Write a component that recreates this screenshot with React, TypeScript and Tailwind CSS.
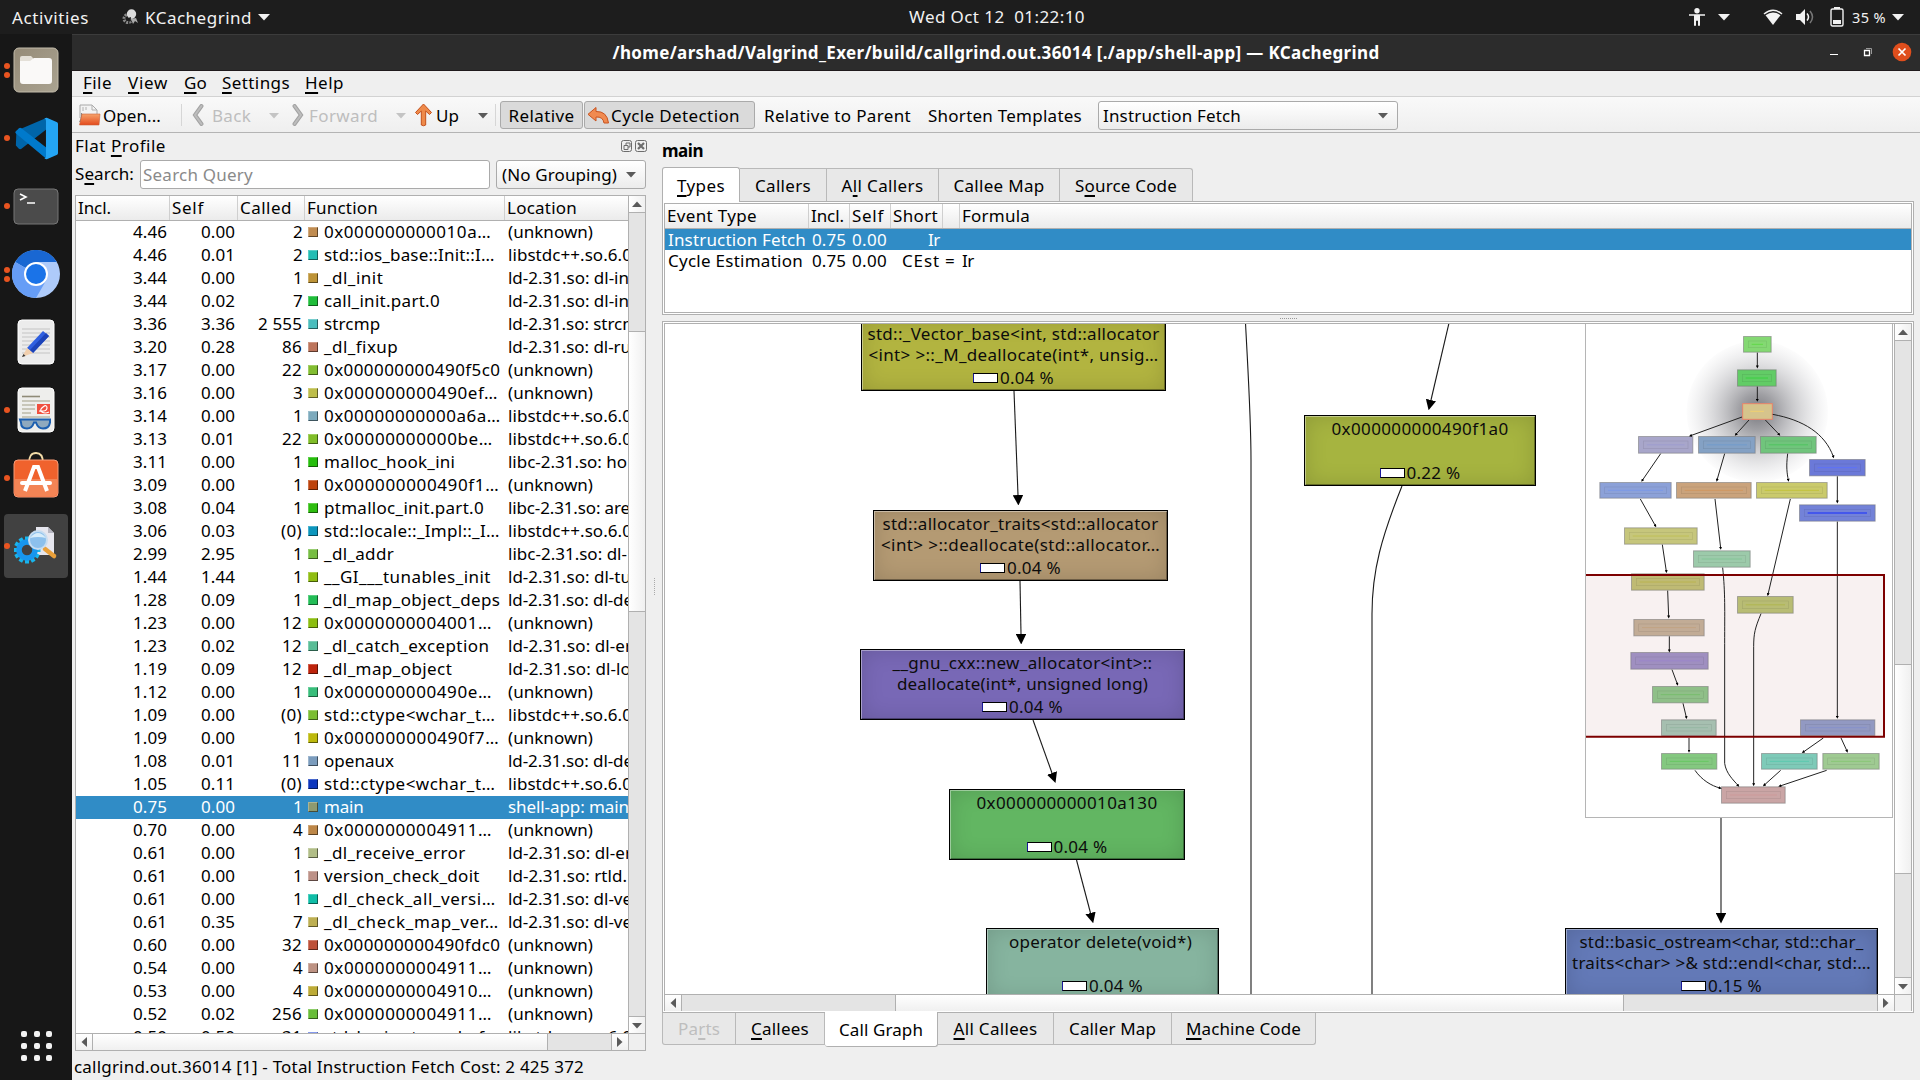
import React, { useLayoutEffect, useRef, useState } from 'react';

/* Single-line label tracked so that it spans exactly `w` pixels; `u` marks the mnemonic character. */
function T({ t, w, u, c = '' }: { t: string; w?: number; u?: number; c?: string }) {
  const ref = useRef<HTMLSpanElement>(null);
  const [ls, setLs] = useState(0);
  useLayoutEffect(() => {
    if (!w || !ref.current) return;
    const natural = ref.current.getBoundingClientRect().width;
    setLs((prev) => prev + (w - natural) / t.length);
  }, [w, t]);
  return (
    <span ref={ref} className={`inline-block shrink-0 whitespace-pre ${c}`} style={{ letterSpacing: `${ls}px` }}>
      {u === undefined ? (
        t
      ) : (
        <>
          {t.slice(0, u)}
          <span className="underline decoration-[1.5px] underline-offset-[3px]">{t[u]}</span>
          {t.slice(u + 1)}
        </>
      )}
    </span>
  );
}

function Tri({ dir = 'down', c = 'text-[#5a5a5a]' }: { dir?: 'down' | 'up' | 'left' | 'right'; c?: string }) {
  const d = { down: 'M0 3h10l-5 5.5z', up: 'M0 8h10l-5-5.5z', left: 'M8 0v10l-5.5-5z', right: 'M2 0v10l5.500-5z' }[dir];
  return (
    <svg className={`h-[10px] w-[10px] shrink-0 ${c}`} viewBox="0 0 10 10">
      <path d={d} fill="currentColor" />
    </svg>
  );
}

const rows: [string, string, string, string, string, number, string, number][] = [
  ['4.46', '0.00', '2', 'bg-[#c08c51]', '0x000000000010a…', 1101, '(unknown)', 85],
  ['4.46', '0.01', '2', 'bg-[#22bdb4]', 'std::ios_base::Init::I…', 1110, 'libstdc++.so.6.0', 124],
  ['3.44', '0.00', '1', 'bg-[#bd9337]', '_dl_init', 819, 'ld-2.31.so: dl-in', 121],
  ['3.44', '0.02', '7', 'bg-[#1fbd3a]', 'call_init.part.0', 967, 'ld-2.31.so: dl-in', 121],
  ['3.36', '3.36', '2 555', 'bg-[#4abdbd]', 'strcmp', 811, 'ld-2.31.so: strcm', 130],
  ['3.20', '0.28', '86', 'bg-[#bd755c]', '_dl_fixup', 858, 'ld-2.31.so: dl-ru', 123],
  ['3.17', '0.00', '22', 'bg-[#82bd31]', '0x000000000490f5c0', 1125, '(unknown)', 85],
  ['3.16', '0.00', '3', 'bg-[#bdbd4a]', '0x000000000490ef…', 1119, '(unknown)', 85],
  ['3.14', '0.00', '1', 'bg-[#7caabd]', '0x00000000000a6a…', 1126, 'libstdc++.so.6.0', 124],
  ['3.13', '0.01', '22', 'bg-[#80bd28]', '0x00000000000be…', 1105, 'libstdc++.so.6.0', 124],
  ['3.11', '0.00', '1', 'bg-[#26bd0c]', 'malloc_hook_ini', 1007, 'libc-2.31.so: ho', 119],
  ['3.09', '0.00', '1', 'bg-[#bd430c]', '0x000000000490f1…', 1122, '(unknown)', 85],
  ['3.08', '0.04', '1', 'bg-[#2ebd0f]', 'ptmalloc_init.part.0', 1082, 'libc-2.31.so: are', 122],
  ['3.06', '0.03', '(0)', 'bg-[#0c96bd]', 'std::locale::_Impl::_I…', 1123, 'libstdc++.so.6.0', 124],
  ['2.99', '2.95', '1', 'bg-[#77bd42]', '_dl_addr', 847, 'libc-2.31.so: dl-', 119],
  ['1.44', '1.44', '1', 'bg-[#90bd12]', '__GI___tunables_init', 1100, 'ld-2.31.so: dl-tu', 123],
  ['1.28', '0.09', '1', 'bg-[#23bd57]', '_dl_map_object_deps', 1125, 'ld-2.31.so: dl-de', 125],
  ['1.23', '0.00', '12', 'bg-[#8bbd0f]', '0x0000000004001…', 1103, '(unknown)', 85],
  ['1.23', '0.02', '12', 'bg-[#58bd96]', '_dl_catch_exception', 1096, 'ld-2.31.so: dl-er', 124],
  ['1.19', '0.09', '12', 'bg-[#bd230c]', '_dl_map_object', 999, 'ld-2.31.so: dl-lo', 123],
  ['1.12', '0.00', '1', 'bg-[#38bd7a]', '0x000000000490e…', 1103, '(unknown)', 85],
  ['1.09', '0.00', '(0)', 'bg-[#7bbd31]', 'std::ctype<wchar_t…', 1112, 'libstdc++.so.6.0', 124],
  ['1.09', '0.00', '1', 'bg-[#bdb90c]', '0x000000000490f7…', 1122, '(unknown)', 85],
  ['1.08', '0.01', '11', 'bg-[#7b9cbd]', 'openaux', 847, 'ld-2.31.so: dl-de', 125],
  ['1.05', '0.11', '(0)', 'bg-[#0c36bd]', 'std::ctype<wchar_t…', 1112, 'libstdc++.so.6.0', 124],
  ['0.75', '0.00', '1', 'bg-[#8d9a70]', 'main', 767, 'shell-app: main', 121],
  ['0.70', '0.00', '4', 'bg-[#bd8748]', '0x0000000004911…', 1103, '(unknown)', 85],
  ['0.61', '0.00', '1', 'bg-[#b1bd87]', '_dl_receive_error', 1034, 'ld-2.31.so: dl-er', 124],
  ['0.61', '0.00', '1', 'bg-[#bd9187]', 'version_check_doit', 1071, 'ld-2.31.so: rtld.', 119],
  ['0.61', '0.00', '1', 'bg-[#0fbda7]', '_dl_check_all_versi…', 1113, 'ld-2.31.so: dl-ve', 124],
  ['0.61', '0.35', '7', 'bg-[#bdaf52]', '_dl_check_map_ver…', 1121, 'ld-2.31.so: dl-ve', 124],
  ['0.60', '0.00', '32', 'bg-[#bd5038]', '0x000000000490fdc0', 1125, '(unknown)', 85],
  ['0.54', '0.00', '4', 'bg-[#bd9283]', '0x0000000004911…', 1103, '(unknown)', 85],
  ['0.53', '0.00', '4', 'bg-[#bdab37]', '0x0000000004910…', 1103, '(unknown)', 85],
  ['0.52', '0.02', '256', 'bg-[#68bd38]', '0x0000000004911…', 1103, '(unknown)', 85],
  ['0.50', '0.50', '31', 'bg-[#5c78e6]', 'std::basic_streambuf…', 1115, 'libstdc++.so.6.0', 124],
];

const numW = (s: string) => ({ 1: 9, 2: 20, 3: s[0] === '(' ? 21 : 30, 4: 34, 5: 44 })[s.length] ?? 34;

function TopBar() {
  return (
    <div className="flex h-[34px] shrink-0 items-center bg-[#1d1d1d] text-[#f2f2f2]">
      <div className="flex w-[909px] items-center pl-[12px]">
        <T t="Activities" w={77} />
        <svg className="ml-[33px] h-[18px] w-[17px]" viewBox="0 0 17 18">
          <circle cx="6" cy="10.500" r="4" fill="none" stroke="#8a8a8a" strokeWidth="3" strokeDasharray="2 1" />
          <path d="M9 11l5-1 2 5-3-2-2 3z" fill="#aaa" />
          <circle cx="9.500" cy="6" r="4.700" fill="#dcdcdc" />
          <path d="M6 10l3-1-1 6z" fill="#1d1d1d" />
        </svg>
        <T t="KCachegrind" w={107} c="ml-[6px] mr-[6px]" />
        <svg className="h-[8px] w-[12px]" viewBox="0 0 12 8"><path d="M0 1h12L6 7.500z" fill="#f2f2f2" /></svg>
      </div>
      <T t="Wed Oct 12  01:22:10" w={176} c="mb-px" />
      <div className="ml-auto flex items-center pr-[16px]">
        <svg className="h-[18px] w-[16px]" viewBox="0 0 16 18" fill="#f2f2f2">
          <circle cx="8" cy="2.700" r="2.700" /><path d="M0 6.200h16v1.600h-5v10H9v-5H7v5H5v-10H0z" />
        </svg>
        <svg className="ml-[13px] h-[8px] w-[12px]" viewBox="0 0 12 8"><path d="M0 1h12L6 7.500z" fill="#f2f2f2" /></svg>
        <svg className="ml-[33px] h-[17px] w-[20px]" viewBox="0 0 20 17">
          <path d="M1 5Q10-2.500 19 5" fill="none" stroke="#f2f2f2" strokeWidth="1.500" /><path d="M2.500 6.200Q10 1 17.500 6.200L10 16z" fill="#f2f2f2" />
        </svg>
        <svg className="ml-[13px] h-[16px] w-[19px]" viewBox="0 0 19 16" fill="none">
          <path d="M0 5h4l5-5v16l-5-5H0z" fill="#f2f2f2" /><path d="M11 4.500q3 3.500 0 7" stroke="#f2f2f2" strokeWidth="1.500" /><path d="M14 2q5 6 0 12" stroke="#777" strokeWidth="1.500" />
        </svg>
        <svg className="ml-[15px] h-[20px] w-[14px]" viewBox="0 0 14 20" fill="none">
          <path d="M4 0h6v2H4z" fill="#f2f2f2" /><rect x="1" y="2" width="12" height="17" rx="1.500" stroke="#f2f2f2" strokeWidth="1.400" /><path d="M3 13h8v4H3z" fill="#f2f2f2" />
        </svg>
        <T t="35 %" w={34} c="ml-[8px] mr-[6px] text-[14.5px]" />
        <svg className="h-[8px] w-[12px]" viewBox="0 0 12 8"><path d="M0 1h12L6 7.500z" fill="#f2f2f2" /></svg>
      </div>
    </div>
  );
}

function DockItem({ dots = 1, active = false, h, children }: { dots?: number; active?: boolean; h: string; children: React.ReactNode }) {
  return (
    <div className={`relative flex w-[72px] shrink-0 items-center justify-center ${h}`}>
      {active && <div className="absolute inset-y-[2px] left-[4px] right-[4px] rounded-[4px] bg-[#414141]" />}
      <div className="absolute inset-y-0 left-[4px] flex flex-col justify-center gap-[3px]">
        {dots > 0 && <div className="h-[6px] w-[6px] rounded-full bg-[#e95420]" />}
        {dots > 1 && <div className="h-[6px] w-[6px] rounded-full bg-[#e95420]" />}
      </div>
      <div className="relative">{children}</div>
    </div>
  );
}

function Dock() {
  const gear = Array.from({ length: 12 }, (_, i) => i * 30);
  return (
    <div className="flex w-[72px] shrink-0 flex-col bg-[#171717] pt-[2px]">
      <DockItem dots={2} h="h-[68px]">
        <svg className="h-[46px] w-[46px]" viewBox="0 0 46 46">
          <defs><linearGradient id="fl" x1="0" y1="0" x2="1" y2="1"><stop offset="0" stopColor="#958b78" /><stop offset="1" stopColor="#aaa391" /></linearGradient></defs>
          <rect x="1" y="1" width="44" height="44" rx="5" fill="url(#fl)" stroke="#c3bcab" />
          <path d="M7 13v-2q0-2 2-2h9l3 3h8v5H7z" fill="#e4e0d8" /><path d="M7 14h10l4-3h15q3 0 3 3v20q0 3-3 3H10q-3 0-3-3z" fill="#faf9f8" />
        </svg>
      </DockItem>
      <DockItem h="h-[68px]">
        <svg className="h-[43px] w-[43px]" viewBox="0 0 100 100">
          <path d="M2 34l7-8q3-2 6 0l59 46v26L3 68q-4-4 0-7z" fill="#0065a9" transform="matrix(1 0 0 -1 0 100)" />
          <path d="M2 34l7-8q3-2 6 0l59 46v26L3 39q-3-2-1-5z" fill="#007acc" />
          <path d="M74 2l24 10q2 1 2 4v68q0 3-2 4L74 98l-6-1q4-1 4-6V9q0-5-4-6z" fill="#24a5f4" />
        </svg>
      </DockItem>
      <DockItem h="h-[68px]">
        <svg className="h-[37px] w-[46px]" viewBox="0 0 46 37">
          <rect x="1" y="1" width="44" height="35" rx="4" fill="#4b4b4b" stroke="#777" />
          <path d="M7 6l6 3-6 3M14 15h8" stroke="#fff" strokeWidth="1.600" fill="none" />
        </svg>
      </DockItem>
      <DockItem dots={2} h="h-[68px]">
        <svg className="h-[48px] w-[48px]" viewBox="0 0 48 48">
          <circle cx="24" cy="24" r="24" fill="#aecbfa" />
          <path d="M24 24L3.200 12A24 24 0 0 1 44.800 12z" fill="#1967d2" />
          <path d="M3.200 12A24 24 0 0 0 24 48L34.400 30 24 24z" fill="#669df6" />
          <path d="M24 12h20.800L34 24z" fill="#aecbfa" />
          <circle cx="24" cy="24" r="12" fill="#fff" /><circle cx="24" cy="24" r="10" fill="#1a73e8" />
        </svg>
      </DockItem>
      <DockItem dots={0} h="h-[68px]">
        <svg className="h-[46px] w-[38px]" viewBox="0 0 38 46">
          <rect x="1" y="1" width="36" height="44" rx="4" fill="#ececec" stroke="#fff" />
          <path d="M5 10h28M5 14h28M5 18h28M5 22h28M5 26h28M5 30h28M5 34h28" stroke="#c4c4c4" />
          <path d="M10 29L26 12l6 5-16 17z" fill="#2f5fe0" /><path d="M13 31l16-17 3 3-16 17z" fill="#1c43b8" /><path d="M10 29l6 5-11 4z" fill="#f1cfae" /><path d="M6.500 35l2 2-3.500 1z" fill="#333" />
        </svg>
      </DockItem>
      <DockItem h="h-[68px]">
        <svg className="h-[46px] w-[38px]" viewBox="0 0 38 46">
          <rect x="1" y="1" width="36" height="44" rx="4" fill="#eeeeec" stroke="#fff" />
          <path d="M5 9.500h18" stroke="#8f8b78" strokeWidth="1.600" /><path d="M5 14h28M5 18h13M5 22h13M5 26h9M5 30h28" stroke="#bcb9a8" strokeWidth="1.600" />
          <rect x="20" y="17" width="13" height="10" fill="#f0503f" /><path d="M22 24q8 1 8-3t-4-1-1 5 7 0" stroke="#fff" strokeWidth="1.200" fill="none" />
          <path d="M3 32.500h30v3q-1 6-7 6-5 0-7-6h-2q-2 6-7 6-6 0-6-6z" fill="#8fa9be" stroke="#1c5fb0" strokeWidth="2" />
        </svg>
      </DockItem>
      <DockItem h="h-[68px]">
        <svg className="mb-[8px] h-[48px] w-[46px]" viewBox="0 0 46 48">
          <path d="M16 13q0-10 7-10t7 10" fill="none" stroke="#f3dca8" strokeWidth="1.800" />
          <rect x="1" y="10" width="44" height="37" rx="4" fill="#f0622d" stroke="#f79c79" /><path d="M2 29h42v14q0 3-3 3H5q-3 0-3-3z" fill="#f38455" />
          <path d="M12 41l9-24h4l9 24" fill="none" stroke="#fff" strokeWidth="4" /><path d="M9 33h28" stroke="#fff" strokeWidth="4" strokeLinecap="round" />
        </svg>
      </DockItem>
      <DockItem active h="h-[68px]">
        <svg className="h-[40px] w-[44px]" viewBox="0 0 44 40">
          <path d="M22 1h12l6 6v22H22z" fill="#e6e6ee" /><path d="M34 1v6h6z" fill="#b5b5c0" />
          <g transform="translate(13 24)">
            {gear.map((a) => <rect key={a} x="-2" y="-13.5" width="4" height="6" fill="#19b5ec" transform={`rotate(${a})`} />)}
            <circle r="8" fill="none" stroke="#1796ee" strokeWidth="5.500" />
          </g>
          <path d="M31 23l9 7" stroke="#e9a03a" strokeWidth="4.500" strokeLinecap="round" />
          <circle cx="24" cy="14" r="9" fill="#8cc0ec" stroke="#c6dcf0" strokeWidth="2" /><path d="M16 12q8-10 16 0-8-2-16 0z" fill="#d8edfa" />
        </svg>
      </DockItem>
      <div className="mb-[19px] ml-[21px] mt-auto grid w-[32px] grid-cols-3 gap-[6px]">
        {gear.slice(0, 9).map((k) => <div key={k} className="h-[6px] w-[6px] rounded-[2px] bg-[#f2f2f2]" />)}
      </div>
    </div>
  );
}

function Toolbar() {
  return (
    <div className="flex h-[37px] shrink-0 items-center border-b border-t border-b-[#b4b4b4] border-t-[#d2d2d2] bg-gradient-to-b from-[#f9f9f9] to-[#efefef] pl-[6px] pt-px">
      <svg className="h-[22px] w-[23px] shrink-0" viewBox="0 0 23 22">
        <path d="M2 1h12l5 5v8H2z" fill="#f3f3f3" stroke="#a8a8a8" /><path d="M14 1v5h5M5 3v4M8 3v3" fill="none" stroke="#b0b0b0" />
        <path d="M1 18l2-4V9h1v9z" fill="#888" />
        <defs><linearGradient id="fo" x1="0" y1="0" x2="0" y2="1"><stop offset="0" stopColor="#f6a36c" /><stop offset="1" stopColor="#e34a1c" /></linearGradient></defs>
        <path d="M4 10h18l-1 11H1.500z" fill="url(#fo)" stroke="#c9623a" strokeWidth=".6" />
      </svg>
      <T t="Open..." w={58} c="ml-[2px]" />
      <div className="ml-[20px] h-[22px] w-px bg-[#d6d6d6]" />
      <svg className="ml-[10px] h-[22px] w-[12px]" viewBox="0 0 12 22"><path d="M9.500 2L3 11l6.500 9" fill="none" stroke="#a3a3a3" strokeWidth="4" strokeLinecap="round" /><path d="M9.500 2L3 11l6.500 9" fill="none" stroke="#bdbdbd" strokeWidth="2" strokeLinecap="round" /></svg>
      <T t="Back" w={39} c="ml-[8px] text-[#bebebe]" />
      <div className="ml-[18px]"><Tri c="text-[#c4c4c4]" /></div>
      <svg className="ml-[13px] h-[22px] w-[12px]" viewBox="0 0 12 22"><path d="M2.500 2L9 11l-6.500 9" fill="none" stroke="#a3a3a3" strokeWidth="4" strokeLinecap="round" /><path d="M2.500 2L9 11l-6.500 9" fill="none" stroke="#bdbdbd" strokeWidth="2" strokeLinecap="round" /></svg>
      <T t="Forward" w={69} c="ml-[5px] text-[#bebebe]" />
      <div className="ml-[18px]"><Tri c="text-[#c4c4c4]" /></div>
      <svg className="ml-[8px] h-[24px] w-[19px]" viewBox="0 0 19 24"><path d="M9.500 1l8 8.500-2 2-3.800-3.500V22q-2.200 1.500-4.400 0V8L3.500 11.500l-2-2z" fill="#ee8a4a" stroke="#c4501b" /></svg>
      <T t="Up" w={23} c="ml-[3px]" />
      <div className="ml-[19px] mr-[7px]"><Tri /></div>
      <div className="mr-[4px] h-[22px] w-px bg-[#d6d6d6]" />
      <div className="flex h-[28px] w-[83px] items-center justify-center rounded-[3px] border border-[#aaa] bg-[#dadada]"><T t="Relative" w={66} /></div>
      <div className="ml-px flex h-[28px] w-[171px] items-center rounded-[3px] border border-[#aaa] bg-[#dadada] pl-[2px]">
        <svg className="h-[20px] w-[23px]" viewBox="0 0 23 20"><path d="M9 2.500v4Q20 6 21.500 18H17Q16 11.500 9 12v4L1 9.300z" fill="#f08a50" stroke="#c9531f" /></svg>
        <T t="Cycle Detection" w={129} c="ml-px" />
      </div>
      <T t="Relative to Parent" w={147} c="ml-[9px]" />
      <T t="Shorten Templates" w={154} c="ml-[17px]" />
      <div className="ml-[16px] flex h-[29px] w-[300px] items-center justify-between rounded-[3px] border border-[#aaa] bg-gradient-to-b from-white to-[#ececec] pl-[4px] pr-[9px]">
        <T t="Instruction Fetch" w={138} /><Tri />
      </div>
    </div>
  );
}

const head = 'bg-gradient-to-b from-white to-[#ebebeb]';
const sbtnV = 'flex h-[17px] shrink-0 items-center justify-center bg-gradient-to-r from-white to-[#f0f0f0]';
const sbtnH = 'flex w-[17px] shrink-0 items-center justify-center bg-gradient-to-b from-white to-[#f0f0f0]';

function FlatProfile() {
  return (
    <div className="flex w-[574px] shrink-0 flex-col">
      <div className="flex h-[25px] shrink-0 items-center pl-[3px]">
        <T t="Flat Profile" w={91} u={5} c="mb-px" />
        <svg className="-mr-px ml-auto h-[12px] w-[26px]" viewBox="0 0 26 12" fill="none" stroke="#6d6d6d">
          <rect x=".5" y=".5" width="10" height="11" rx="2" /><path d="M3 5.500h4v4H3zM5 5V3h4v4H7" /><rect x="14.500" y=".5" width="11" height="11" rx="2" /><path d="M17 3l6 6M23 3l-6 6" strokeWidth="2.200" />
        </svg>
      </div>
      <div className="flex h-[37px] shrink-0 items-start pl-[3px] pt-[2px]">
        <T t="Search:" w={59} u={1} c="mt-[2px]" />
        <div className="ml-[6px] flex h-[29px] w-[350px] items-center rounded-[3px] border border-[#aaa] bg-white pb-px pl-[2px] text-[#8a8a8a]"><T t="Search Query" w={110} /></div>
        <div className="ml-[6px] flex h-[29px] w-[150px] items-center justify-between rounded-[3px] border border-[#aaa] bg-gradient-to-b from-white to-[#ececec] pb-px pl-[5px] pr-[9px]"><T t="(No Grouping)" w={115} /><Tri /></div>
      </div>
      <div className="ml-[3px] flex h-[856px] w-[571px] shrink-0 flex-col border border-[#b0b0b0] bg-white">
        <div className="flex h-[837px]">
          <div className="flex w-[552px] flex-col overflow-hidden">
            <div className={`flex h-[25px] shrink-0 items-center border-b border-[#b0b0b0] ${head}`}>
              <div className="h-full w-[94px] border-r border-[#cfcfcf] pl-[2px]"><T t="Incl." w={33} /></div>
              <div className="h-full w-[68px] border-r border-[#cfcfcf] pl-[2px]"><T t="Self" w={32} /></div>
              <div className="h-full w-[67px] border-r border-[#cfcfcf] pl-[2px]"><T t="Called" w={52} /></div>
              <div className="h-full w-[200px] border-r border-[#cfcfcf] pl-[2px]"><T t="Function" w={71} /></div>
              <div className="h-full pl-[2px]"><T t="Location" w={70} /></div>
            </div>
            {rows.map((r, i) => (
              <div key={i} className={i === 25 ? 'flex h-[23px] shrink-0 items-start bg-[#308cc6] leading-[21px] text-white' : 'flex h-[23px] shrink-0 items-start leading-[21px]'}>
                <div className="flex w-[91px] shrink-0 justify-end"><T t={r[0]} w={numW(r[0])} /></div>
                <div className="flex w-[68px] shrink-0 justify-end"><T t={r[1]} w={numW(r[1])} /></div>
                <div className="flex w-[67px] shrink-0 justify-end"><T t={r[2]} w={numW(r[2])} /></div>
                <div className={`ml-[6px] mr-[6px] mt-[6px] h-[10px] w-[10px] shrink-0 border border-b-black/50 border-l-white/25 border-r-black/50 border-t-white/25 ${r[3]}`} />
                <div className="w-[184px] shrink-0"><T t={r[4]} w={(r[5] - 664) / 2.613} /></div>
                <T t={r[6]} w={r[7]} />
              </div>
            ))}
          </div>
          <div className="flex w-[17px] flex-col border-l border-[#b0b0b0] bg-[#e4e4e4]">
            <div className={`${sbtnV} border-b border-[#b0b0b0]`}><Tri dir="up" /></div>
            <div className="mt-[118px] h-[281px] border-y border-[#b0b0b0] bg-gradient-to-r from-white to-[#f0f0f0]" />
            <div className={`${sbtnV} mt-auto border-t border-[#b0b0b0]`}><Tri /></div>
          </div>
        </div>
        <div className="flex h-[17px] border-t border-[#b0b0b0] bg-[#e4e4e4]">
          <div className={`${sbtnH} border-r border-[#b0b0b0]`}><Tri dir="left" /></div>
          <div className="w-[455px] border-r border-[#b0b0b0] bg-gradient-to-b from-white to-[#f0f0f0]" />
          <div className={`${sbtnH} ml-auto border-l border-[#b0b0b0]`}><Tri dir="right" /></div>
          <div className="w-[17px] border-l border-[#b0b0b0] bg-[#efefef]" />
        </div>
      </div>
    </div>
  );
}

function Tab({ t, w, u, c }: { t: string; w: number; u?: number; c: string }) {
  return <div className={`flex shrink-0 items-center justify-center ${c}`}><T t={t} w={w} u={u} /></div>;
}

const tabT = 'h-[33px] border-r border-t border-[#b9b9b9] bg-[#e8e8e8]';
const tabB = 'h-[32px] border-b border-r border-[#b9b9b9] bg-[#e8e8e8]';

const nodes: { box: string; lines: [string, number][]; pct: string }[] = [
  { box: 'left-[197px] top-[-4px] w-[305px] bg-[#b2b440]', lines: [['std::_Vector_base<int, std::allocator', 292], ['<int> >::_M_deallocate(int*, unsig…', 290]], pct: '0.04 %' },
  { box: 'left-[209px] top-[186px] w-[295px] bg-[#b49a73]', lines: [['std::allocator_traits<std::allocator', 276], ['<int> >::deallocate(std::allocator…', 279]], pct: '0.04 %' },
  { box: 'left-[196px] top-[325px] w-[325px] bg-[#7868b6]', lines: [['__gnu_cxx::new_allocator<int>::', 260], ['deallocate(int*, unsigned long)', 251]], pct: '0.04 %' },
  { box: 'left-[285px] top-[465px] w-[236px] bg-[#62b662]', lines: [['0x000000000010a130', 181]], pct: '0.04 %' },
  { box: 'left-[322px] top-[604px] w-[233px] bg-[#86b49f] pr-[4px]', lines: [['operator delete(void*)', 183]], pct: '0.04 %' },
  { box: 'left-[640px] top-[91px] w-[232px] bg-[#a6b440]', lines: [['0x000000000490f1a0', 177]], pct: '0.22 %' },
  { box: 'left-[901px] top-[604px] w-[313px] bg-[#6379b7]', lines: [['std::basic_ostream<char, std::char_', 284], ['traits<char> >& std::endl<char, std:…', 299]], pct: '0.15 %' },
];

const mini: [number, number, number, number, string][] = [
  [519, 78, 605, 128, '#84d873'], [501, 178, 620, 230, '#62cc66'], [204, 378, 370, 431, '#a8a6ca'], [384, 378, 557, 431, '#84a1c4'], [570, 378, 740, 431, '#70c47c'],
  [717, 447, 887, 499, '#6b79d8'], [88, 516, 305, 566, '#8ca1d8'], [318, 516, 545, 566, '#caa37c'], [558, 516, 773, 566, '#caca6c'], [687, 583, 917, 635, '#7382d8'],
  [162, 652, 383, 704, '#c6c67c'], [369, 721, 542, 773, '#9ccaaa'], [183, 790, 404, 842, '#bfba74'], [501, 858, 671, 911, '#b8bc74'], [190, 927, 404, 979, '#c2ac96'],
  [181, 1026, 416, 1079, '#9f8fc0'], [246, 1128, 416, 1180, '#8fbf88'], [273, 1228, 440, 1278, '#a6bfb0'], [690, 1228, 916, 1278, '#9299c2'], [273, 1329, 442, 1379, '#84c880'],
  [573, 1329, 743, 1379, '#7ecab8'], [757, 1329, 929, 1379, '#9fca92'], [453, 1429, 647, 1481, '#caa5a5'],
];
const miniEdges = [
  'M562 128V170', 'M562 230V270', 'M516 321L362 377', 'M537 330L498 373', 'M586 330L627 373', 'M608 313C700 330 765 370 790 440', 'M272 431L217 511', 'M464 431L441 510',
  'M653 431C648 470 651 490 655 510', 'M802 499V575', 'M211 567L256 647', 'M435 567L452 714', 'M661 567L594 853', 'M802 635V1221', 'M277 704L289 784', 'M293 842L296 920',
  'M298 979V1022', 'M306 1079L322 1122', 'M339 1180L349 1222', 'M357 1284V1323', 'M760 1284L700 1326', 'M813 1284L831 1323', 'M458 773C466 850 464 900 464 1000V1360C468 1390 490 1410 504 1426',
  'M573 911C555 955 551 970 551 1010V1423', 'M375 1381C395 1410 425 1428 450 1434', 'M632 1381L583 1425', 'M770 1381L630 1428',
];

function MiniMap() {
  return (
    <div className="absolute left-[921px] top-[-1px] h-[495px] w-[308px] border border-[#b5b5b5] bg-white">
      <svg className="h-full w-full" viewBox="48 42 918 1479">
        <defs>
          <radialGradient id="glow"><stop offset="0" stopColor="#77777d" /><stop offset=".25" stopColor="#8e8e93" stopOpacity=".85" /><stop offset="1" stopColor="#c8c8cc" stopOpacity="0.05" /></radialGradient>
          <marker id="ma" viewBox="0 0 10 10" refX="4" refY="5" markerWidth="10" markerHeight="9" markerUnits="userSpaceOnUse" orient="auto"><path d="M0 0L10 5L0 10z" /></marker>
        </defs>
        <circle cx="562" cy="305" r="212" fill="url(#glow)" />
        <rect x="30" y="795" width="912" height="485" fill="#f8f1f1" />
        {mini.map(([a, b, c, d, f], i) => (
          <g key={i}>
            <rect x={a + 1.5} y={b + 1.5} width={c - a - 3} height={d - b - 3} fill={f} stroke="#777" strokeOpacity=".55" strokeWidth="3" />
            <rect x={a + 16} y={b + 15} width={c - a - 32} height={d - b - 30} fill="none" stroke={f} strokeWidth="2" className="brightness-90" />
            <path d={`M${a + 26} ${(b + d) / 2}H${c - 26}`} stroke={i === 9 ? '#2233c8' : f} strokeWidth="3" className="saturate-150 brightness-95" />
          </g>
        ))}
        <rect x="518" y="281" width="89" height="47" fill="#d6c48c" stroke="#e8846a" strokeWidth="3" />
        <path d="M541 304H582" stroke="#f0d070" strokeWidth="3" />
        {miniEdges.map((d) => <path key={d} d={d} fill="none" stroke="#222" strokeWidth="3" markerEnd="url(#ma)" />)}
        <path d="M40 795H942V1280H40" fill="none" stroke="#7d0000" strokeWidth="6" />
      </svg>
    </div>
  );
}

function CallGraph() {
  return (
    <div className="relative h-[670px] w-[1229px] overflow-hidden bg-white">
      <div className="absolute -left-px top-0 h-[670px] w-[1230px]">
        <svg className="absolute left-0 top-0 h-[670px] w-[1229px]" viewBox="664 324 1229 670" fill="none" stroke="#1a1a1a" strokeWidth="1.100">
          <defs><marker id="ar" viewBox="0 0 10 10" refX="0" refY="5" markerWidth="10.500" markerHeight="10.500" markerUnits="userSpaceOnUse" orient="auto"><path d="M0 0L10 5L0 10z" fill="#000" stroke="none" /></marker></defs>
          <path d="M1014 391L1018 495" markerEnd="url(#ar)" /><path d="M1020 581L1021 634" markerEnd="url(#ar)" /><path d="M1033 720L1052 773" markerEnd="url(#ar)" />
          <path d="M1076.500 860L1090.500 913" markerEnd="url(#ar)" /><path d="M1449 323L1431 400" markerEnd="url(#ar)" /><path d="M1721 810V913" markerEnd="url(#ar)" />
          <path d="M1245.500 323C1249 390 1251 420 1251 460V994" /><path d="M1402 486C1382 536 1372 570 1372 614V994" />
        </svg>
        {nodes.map((n, i) => (
          <div key={i} className={`absolute flex h-[71px] flex-col items-center border border-black pt-[2px] leading-[21px] text-[#0c0c0c] shadow-[inset_1px_1px_0_rgba(255,255,255,.4),inset_-1px_-1px_0_rgba(0,0,0,.35),inset_0_0_22px_rgba(0,0,0,.15)] ${n.box}`}>
            {n.lines.map(([t, w]) => <T key={t} t={t} w={w} />)}
            <div className="absolute inset-x-0 bottom-[2px] flex items-center justify-center">
              <div className="mr-[2px] h-[10px] w-[25px] border border-black border-l-[#1a1a9c] bg-white" /><T t={n.pct} w={54} />
            </div>
          </div>
        ))}
        <MiniMap />
      </div>
    </div>
  );
}

function RightPane() {
  return (
    <div className="flex w-[1252px] shrink-0 flex-col">
      <div className="flex h-[34px] shrink-0 items-center"><T t="main" w={41} c="font-bold" /></div>
      <div className="relative z-10 mb-[-1px] flex h-[35px] shrink-0 items-end">
        <Tab t="Types" w={48} u={0} c="h-[35px] w-[78px] rounded-t-[3px] border border-b-0 border-[#b0b0b0] bg-white" />
        <div className="mb-[1px] flex">
          <Tab t="Callers" w={56} c={`${tabT} w-[87px]`} /><Tab t="All Callers" w={82} u={1} c={`${tabT} w-[112px]`} /><Tab t="Callee Map" w={91} c={`${tabT} w-[121px]`} /><Tab t="Source Code" w={102} u={1} c={`${tabT} w-[133px] rounded-tr-[3px]`} />
        </div>
      </div>
      <div className="h-[114px] shrink-0 border border-[#b0b0b0] bg-white p-px">
        <div className="h-[110px] border border-[#b0b0b0]">
          <div className={`flex h-[25px] border-b border-[#b0b0b0] ${head}`}>
            <div className="w-[144px] border-r border-[#cfcfcf] pl-[2px]"><T t="Event Type" w={90} /></div>
            <div className="w-[41px] border-r border-[#cfcfcf] pl-[2px]"><T t="Incl." w={33} /></div>
            <div className="w-[41px] border-r border-[#cfcfcf] pl-[2px]"><T t="Self" w={32} /></div>
            <div className="w-[52px] border-r border-[#cfcfcf] pl-[2px]"><T t="Short" w={45} /></div>
            <div className="w-[17px] border-r border-[#cfcfcf]" /><div className="pl-[2px]"><T t="Formula" w={68} /></div>
          </div>
          <div className="flex h-[21px] items-center bg-[#308cc6] pb-px pl-[3px] text-white"><T t="Instruction Fetch" w={138} /><T t="0.75" w={34} c="ml-[6px]" /><T t="0.00" w={35} c="ml-[6px]" /><T t="Ir" w={12} c="ml-[41px]" /></div>
          <div className="flex h-[21px] items-center pb-px pl-[3px]"><T t="Cycle Estimation" w={135} /><T t="0.75" w={34} c="ml-[9px]" /><T t="0.00" w={35} c="ml-[6px]" /><T t="CEst" w={38} c="ml-[15px]" /><T t="=" w={11} c="ml-[5px]" /><T t="Ir" w={12} c="ml-[6px]" /></div>
        </div>
      </div>
      <div className="flex h-[6px] shrink-0 items-center justify-center"><div className="w-[17px] border-t border-dotted border-[#999]" /></div>
      <div className="h-[692px] shrink-0 border border-[#b0b0b0] bg-white p-px">
        <div className="h-[688px] border border-[#b0b0b0]">
          <div className="flex h-[670px]">
            <CallGraph />
            <div className="flex w-[17px] flex-col border-l border-[#b0b0b0] bg-[#e4e4e4]">
              <div className={`${sbtnV} border-b border-[#b0b0b0]`}><Tri dir="up" /></div>
              <div className="mt-[323px] h-[210px] border-y border-[#b0b0b0] bg-gradient-to-r from-white to-[#f0f0f0]" />
              <div className={`${sbtnV} mt-auto border-t border-[#b0b0b0]`}><Tri /></div>
            </div>
          </div>
          <div className="flex h-[17px] border-t border-[#b0b0b0] bg-[#e4e4e4]">
            <div className={`${sbtnH} border-r border-[#b0b0b0]`}><Tri dir="left" /></div>
            <div className="ml-[213px] w-[729px] border-x border-[#b0b0b0] bg-gradient-to-b from-white to-[#f0f0f0]" />
            <div className={`${sbtnH} ml-auto border-l border-[#b0b0b0]`}><Tri dir="right" /></div>
            <div className="w-[17px] border-l border-[#b0b0b0] bg-[#efefef]" />
          </div>
        </div>
      </div>
      <div className="relative flex items-start">
        <Tab t="Parts" w={42} u={2} c={`${tabB} w-[74px] rounded-bl-[3px] border-l text-[#bebebe]`} /><Tab t="Callees" w={58} u={0} c={`${tabB} w-[89px]`} />
        <Tab t="Call Graph" w={84} c="mt-[-1px] h-[35px] w-[113px] rounded-b-[3px] border-b border-r border-[#b0b0b0] bg-white pt-px" />
        <Tab t="All Callees" w={84} u={0} c={`${tabB} w-[116px]`} /><Tab t="Caller Map" w={87} c={`${tabB} w-[118px]`} /><Tab t="Machine Code" w={115} u={0} c={`${tabB} w-[144px] rounded-br-[3px]`} />
      </div>
    </div>
  );
}

export default function App() {
  return (
    <div className="flex h-[1080px] w-[1920px] flex-col overflow-hidden bg-[#1d1d1d] font-['Noto_Sans',sans-serif] text-[17px] leading-[23px] text-black">
      <TopBar />
      <div className="flex min-h-0 flex-1">
        <Dock />
        <div className="flex w-[1848px] flex-col bg-[#efefef]">
          <div className="relative flex h-[37px] shrink-0 items-center justify-center border-b border-t border-b-[#1f1a1c] border-t-[#3c3c3c] bg-[#2c2c2c] text-white">
            <T t="/home/arshad/Valgrind_Exer/build/callgrind.out.36014 [./app/shell-app] — KCachegrind" w={767} c="font-bold" />
            <svg className="absolute right-[8px] top-[7px] h-[20px] w-[84px]" viewBox="0 0 84 20" fill="none" stroke="#fff">
              <path d="M2 12.500h8" /><path d="M36.500 8.500h5v5h-5z" strokeWidth="1.300" /><path d="M38 6.500h5.500V12" stroke="#999" /><circle cx="74" cy="10" r="9.300" fill="#e04e1c" stroke="none" /><path d="M70.500 6.500l7 7M77.500 6.500l-7 7" strokeWidth="1.700" />
            </svg>
          </div>
          <div className="flex h-[25px] shrink-0 items-center pb-[2px] pl-[11px]">
            <T t="File" w={29} u={0} /><T t="View" w={40} u={0} c="ml-[16px]" /><T t="Go" w={23} u={0} c="ml-[16px]" /><T t="Settings" w={68} u={0} c="ml-[15px]" /><T t="Help" w={39} u={0} c="ml-[15px]" />
          </div>
          <Toolbar />
          <div className="flex h-[918px] shrink-0">
            <FlatProfile />
            <div className="flex w-[16px] shrink-0 items-center justify-center pb-[12px]"><div className="h-[17px] border-l border-dotted border-[#aaa]" /></div>
            <RightPane />
          </div>
          <div className="flex min-h-0 flex-1 items-center pl-[2px] pt-[2px]"><T t="callgrind.out.36014 [1] - Total Instruction Fetch Cost: 2 425 372" w={510} /></div>
        </div>
      </div>
    </div>
  );
}
